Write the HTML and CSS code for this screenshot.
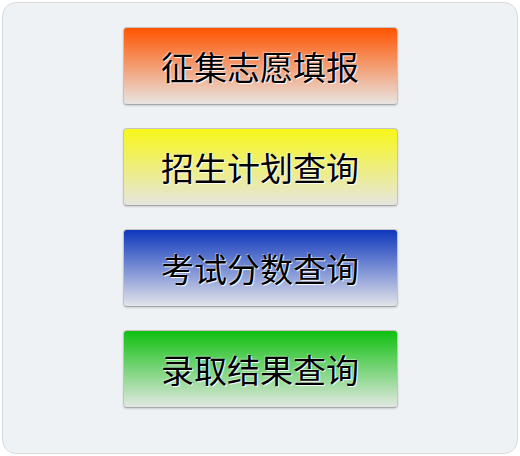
FILE: index.html
```html
<!DOCTYPE html>
<html lang="zh-CN">
  <head>
    <meta charset="UTF-8" />
    <meta name="viewport" content="width=device-width, initial-scale=1.0" />
    <title>查询</title>
    <link rel="stylesheet" href="styles.css">
  </head>
  <body>
    <div class="container">
      <!-- Menu Buttons -->
      <div class="menu">
        <button class="btn btn-orange">征集志愿填报</button>
        <button class="btn btn-yellow">招生计划查询</button>
        <button class="btn btn-blue">考试分数查询</button>
        <button class="btn btn-green">录取结果查询</button>
      </div>
    </div>
  </body>
</html>
```

FILE: styles.css
```css
body {
  margin: 2px;
  background-color: #ffffff;
  font-family: "Noto Sans CJK SC", "Noto Sans", sans-serif;
}
.container {
  box-sizing: border-box;
  width: 516px;
  height: 452px;
  background-color: #eff2f4;
  border: 1px solid #d8dadc;
  border-radius: 14px;
  padding-top: 24px;
}
.menu {
  display: flex;
  flex-direction: column;
  align-items: center;
  gap: 23px;
}
.btn {
  box-sizing: border-box;
  width: 275px;
  height: 78px;
  border: 1px solid #c4c4c4;
  border-bottom-color: #a8a8a8;
  border-radius: 4px;
  box-shadow: 0 1px 2px rgba(0, 0, 0, 0.15);
  font-family: inherit;
  font-size: 33px;
  color: #000;
  text-shadow: 1px 1px 1px #fff, -1px -1px 0 rgba(255, 255, 255, 0.4);
  padding: 0;
  cursor: pointer;
}
.btn-orange {
  background: linear-gradient(to bottom, #ff5400, #e8e4e2);
}
.btn-yellow {
  background: linear-gradient(to bottom, #f7f71a, #e5e5df);
}
.btn-blue {
  background: linear-gradient(to bottom, #0e37bd, #e2e4ea);
}
.btn-green {
  background: linear-gradient(to bottom, #10c010, #e2e8e2);
}
```
